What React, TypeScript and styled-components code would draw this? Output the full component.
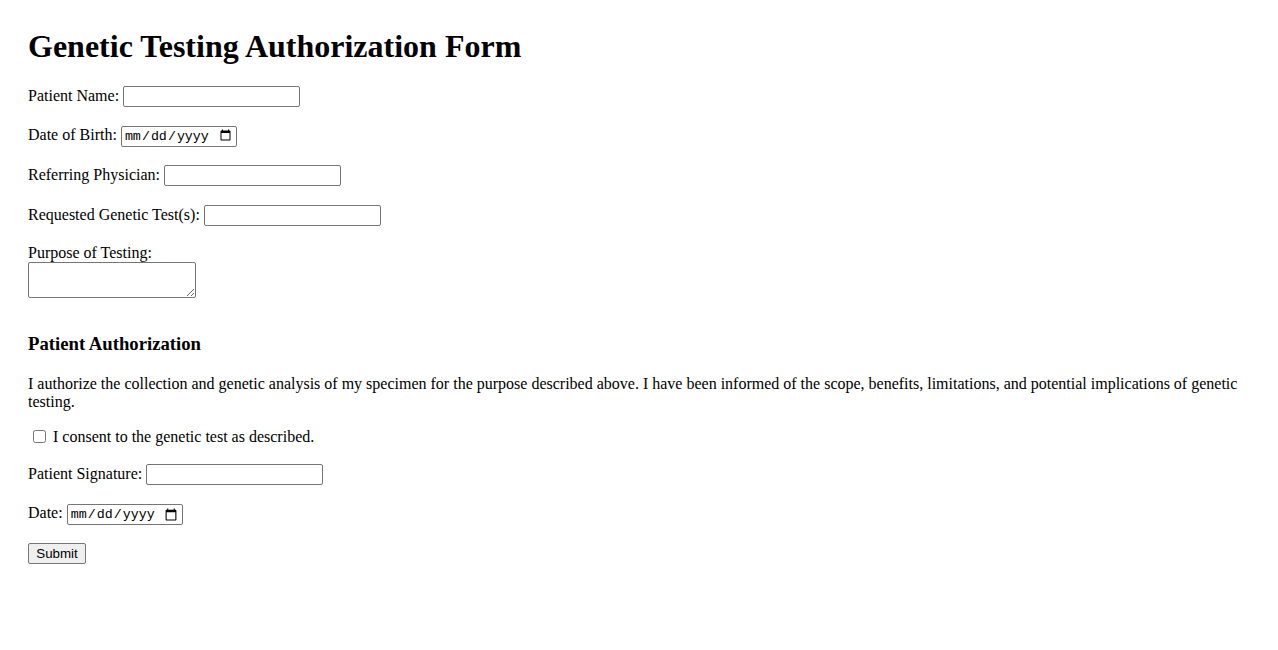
import React, { useState } from 'react';
import styled, { createGlobalStyle } from 'styled-components';

const GlobalStyle = createGlobalStyle`
  body {
    margin: 8px;
    padding: 20px;
    background: #ffffff;
    color: #000000;
    font-family: "Liberation Serif", "Times New Roman", serif;
    font-size: 16px;
  }
`

const Title = styled.h1`
  font-size: 32px;
  font-weight: bold;
  margin: 0 0 21px;
`

const Field = styled.div`
  margin-bottom: 18.5px;
  line-height: normal;
`

const SectionTitle = styled.h3`
  font-size: 18.72px;
  font-weight: bold;
  margin: 34px 0 19.7px;
`

const Notice = styled.p`
  margin: 16px 0;
  line-height: normal;
`

const TextInput = styled.input`
  box-sizing: border-box;
  width: 177px;
  height: 21px;
  padding: 1px 2px;
  border: 1px solid #767676;
  border-radius: 2px;
  font-family: "Liberation Sans", Arial, sans-serif;
  font-size: 13.33px;
  vertical-align: baseline;
`

const DateInput = styled.input`
  box-sizing: border-box;
  width: 116px;
  height: 21px;
  padding: 1px 2px;
  border: 1px solid #767676;
  border-radius: 2px;
  font-family: "Liberation Mono", "Courier New", monospace;
  font-size: 13.33px;
`

const Notes = styled.textarea`
  box-sizing: border-box;
  width: 168px;
  height: 36px;
  margin: 0;
  padding: 2px;
  border: 1px solid #767676;
  border-radius: 2px;
  font-family: "Liberation Mono", monospace;
  font-size: 13.33px;
  vertical-align: text-bottom;
`

const Check = styled.input`
  width: 13px;
  height: 13px;
  margin: 3px 3px 3px 5px;
  vertical-align: -1px;
`

const SubmitButton = styled.button`
  box-sizing: border-box;
  width: 58px;
  height: 21px;
  padding: 1px 6px;
  border: 1px solid #767676;
  border-radius: 2px;
  background: #efefef;
  font-family: "Liberation Sans", Arial, sans-serif;
  font-size: 13.33px;
  color: #000;
`

function App() {
  const [consent, setConsent] = useState<boolean>(false);

  return (<>
    <GlobalStyle />
    <form onSubmit={e => e.preventDefault()}>
      <Title>Genetic Testing Authorization Form</Title>

      <Field>
        <label htmlFor="name">Patient Name: </label>
        <TextInput id="name" type="text" />
      </Field>
      <Field>
        <label htmlFor="dob">Date of Birth: </label>
        <DateInput id="dob" type="date" />
      </Field>
      <Field>
        <label htmlFor="physician">Referring Physician: </label>
        <TextInput id="physician" type="text" />
      </Field>
      <Field>
        <label htmlFor="tests">Requested Genetic Test(s): </label>
        <TextInput id="tests" type="text" />
      </Field>
      <Field>
        <label htmlFor="purpose">Purpose of Testing:</label><br />
        <Notes id="purpose" />
      </Field>

      <SectionTitle>Patient Authorization</SectionTitle>
      <Notice>
        I authorize the collection and genetic analysis of my specimen for the purpose described above. I have been informed of the scope, benefits, limitations, and potential implications of genetic testing.
      </Notice>

      <Field>
        <Check id="consent" type="checkbox" checked={consent} onChange={e => setConsent(e.target.checked)} />{' '}
        <label htmlFor="consent">I consent to the genetic test as described.</label>
      </Field>
      <Field>
        <label htmlFor="signature">Patient Signature: </label>
        <TextInput id="signature" type="text" />
      </Field>
      <Field>
        <label htmlFor="date">Date: </label>
        <DateInput id="date" type="date" />
      </Field>
      <SubmitButton type="submit">Submit</SubmitButton>
    </form>
  </>
  );
}

export default App;
